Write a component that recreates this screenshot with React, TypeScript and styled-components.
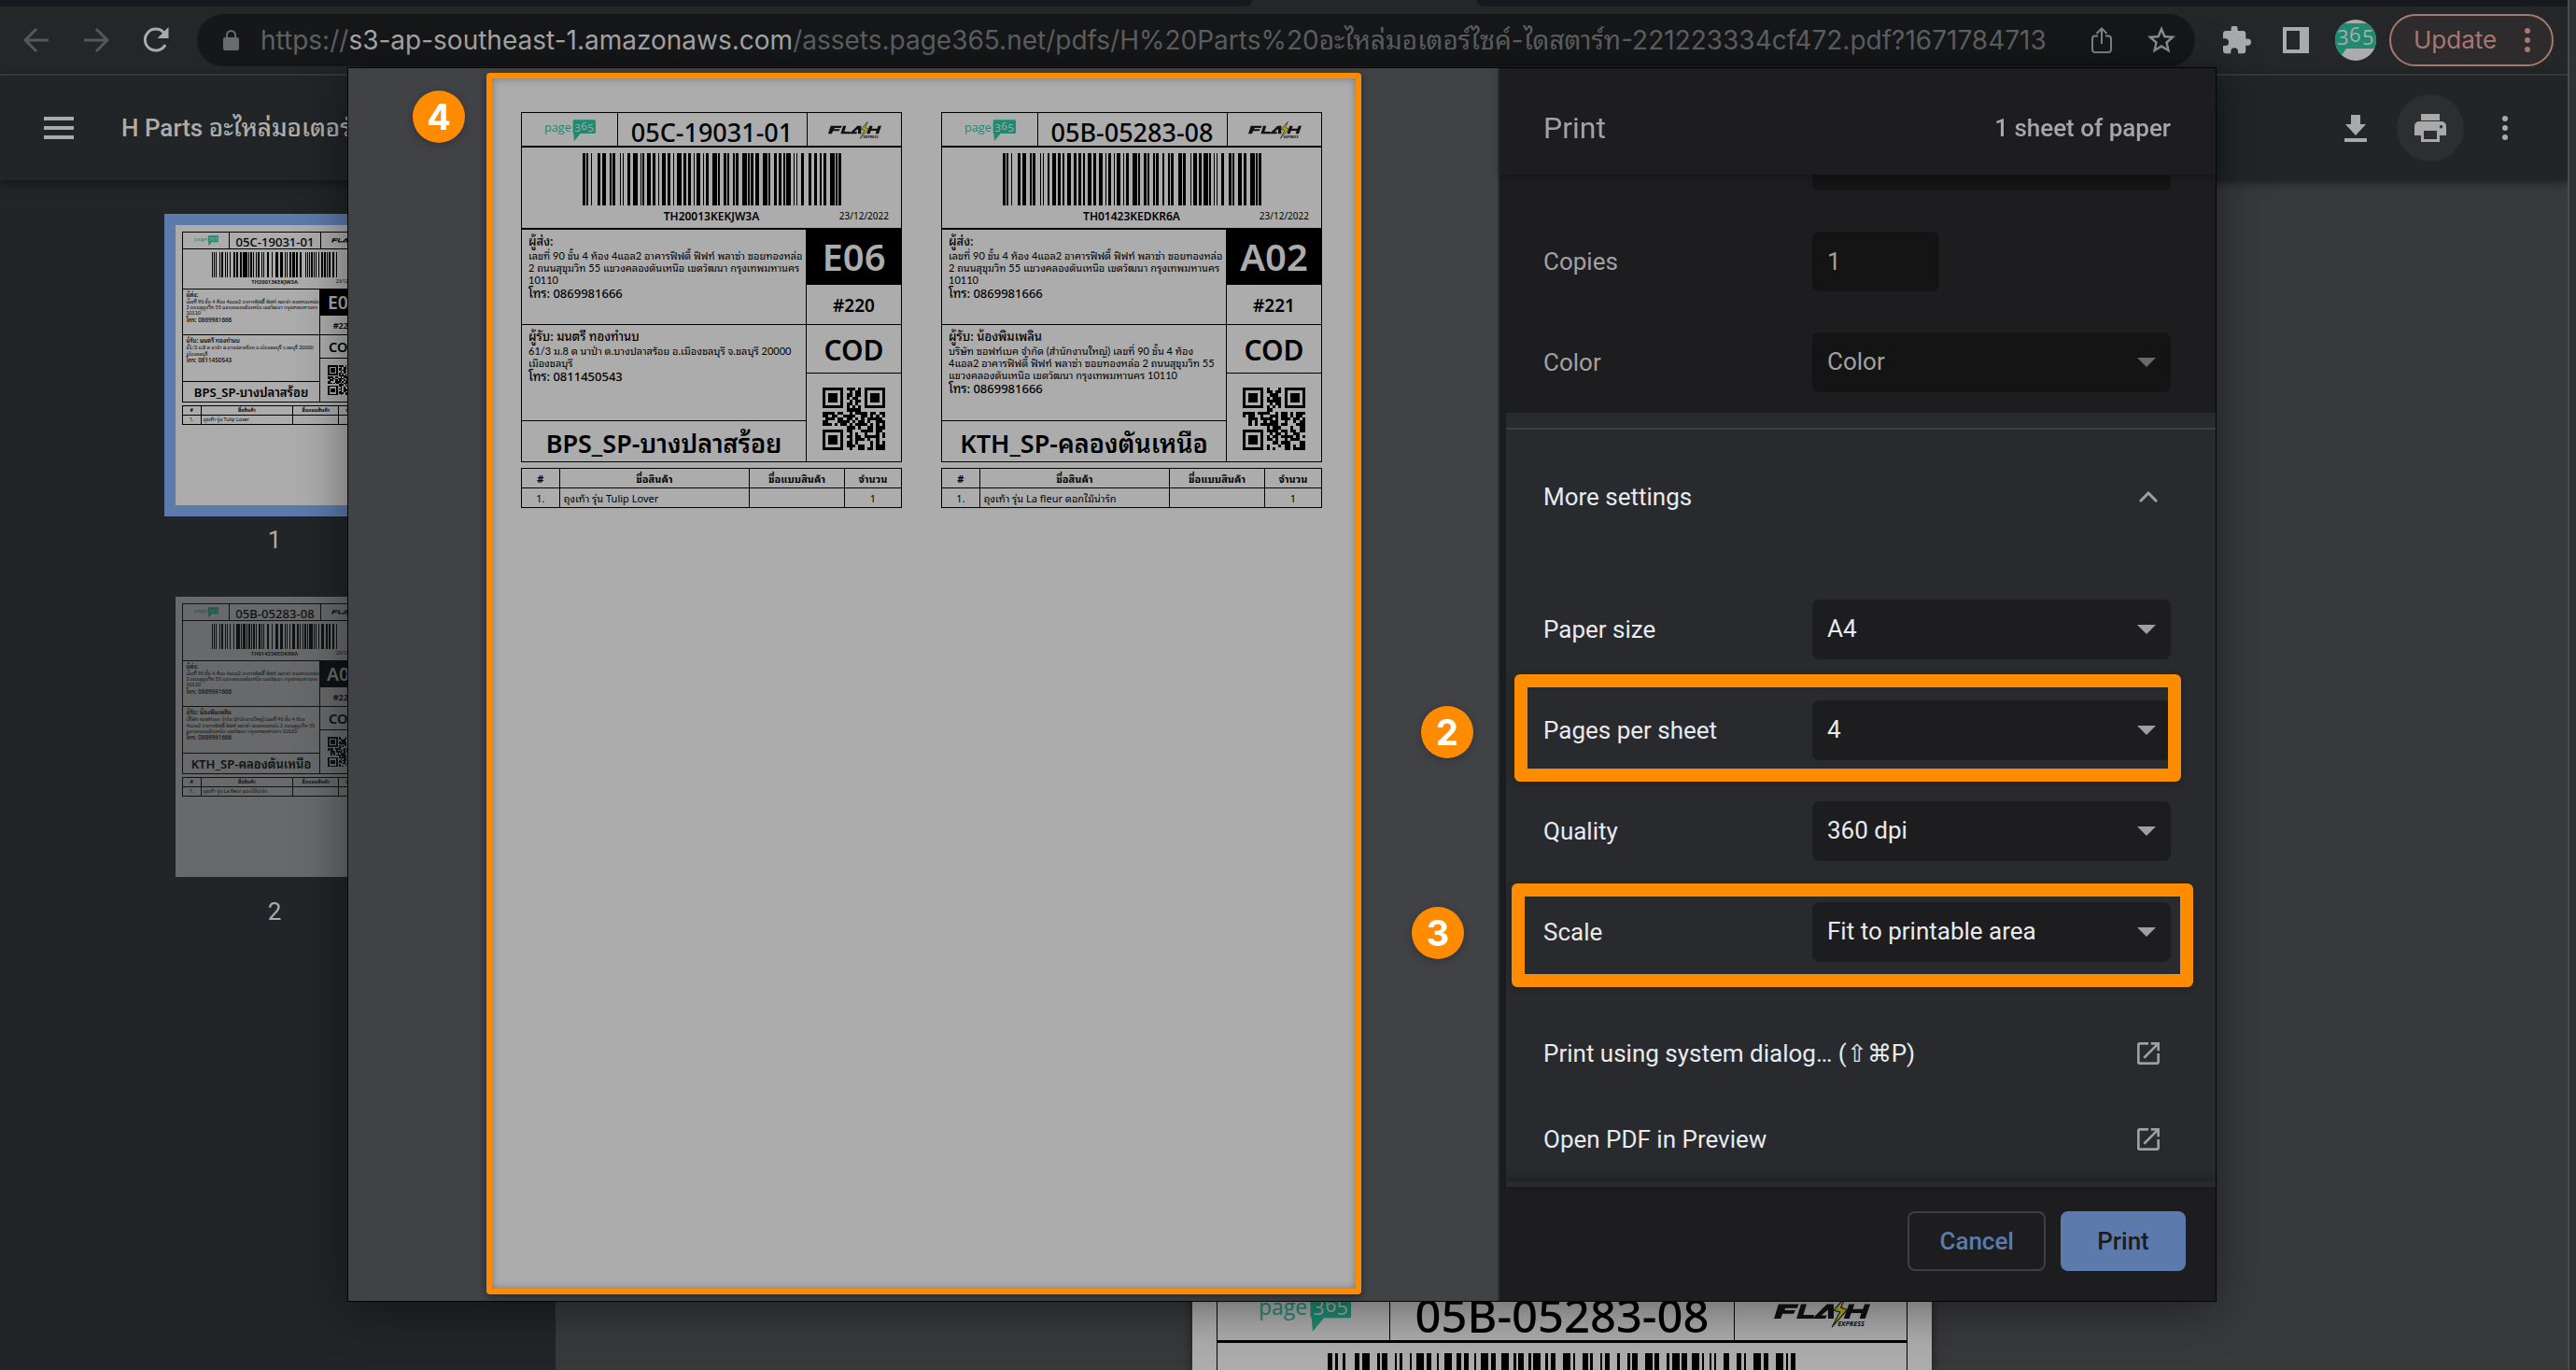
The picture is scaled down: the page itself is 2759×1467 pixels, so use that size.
import React from "react";
import styled, { createGlobalStyle, css } from "styled-components";

const ORANGE = "#ff8c00";
const PAPER = "#acacac";
const INK = "#000";
const THAI = `"Noto Sans Thai Looped", Loma, Garuda, "Noto Sans Thai"`;
const UI = `Roboto, ${THAI}, sans-serif`;
const SYSTEM = `Inter, ${THAI}, sans-serif`;
const PRINT = `"Noto Sans", ${THAI}, sans-serif`;
const PRINT_SMALL = `Lato, ${THAI}, sans-serif`;

const Global = createGlobalStyle`
  *, *::before, *::after { box-sizing: border-box; }
  html, body { margin: 0; height: 100%; overflow: hidden; background: #303132; }
  #root { height: 100%; }
  button, input, select { font: inherit; color: inherit; margin: 0; }
  button { background: none; border: 0; padding: 0; cursor: pointer; }
  svg { display: block; flex: none; }
`;

/* ---------- browser window ---------- */

const Desktop = styled.div`
  height: 100vh;
  padding-right: 7px;
  background: #303132;
  font-family: ${UI};
`;

const Window = styled.div`
  height: 100%;
  display: flex;
  flex-direction: column;
  overflow: hidden;
  border-right: 2px solid #4a4b4d;
  background: #38393b;
`;

const TabStrip = styled.div`
  flex: none;
  height: 7px;
  display: grid;
  grid-template-columns: 1341fr 241fr 1168fr;
  background: #242628;
`;

const InactiveTabs = styled.div<{ $side: "left" | "right" }>`
  background: #17181b;
  border-radius: ${(p) => (p.$side === "left" ? "0 0 7px 0" : "0 0 0 7px")};
`;

const Toolbar = styled.div`
  flex: none;
  height: 74px;
  display: flex;
  align-items: center;
  padding: 0 15px 0 25px;
  background: #242628;
  border-bottom: 2px solid #3e4143;
`;

const NavButtons = styled.div`
  display: flex;
  gap: 36px;
  margin-right: 30px;
`;

const IconButton = styled.button<{ $color?: string }>`
  display: flex;
  color: ${(p) => p.$color ?? "#a9aaab"};
`;

const Omnibox = styled.div`
  flex: 1;
  min-width: 0;
  height: 56px;
  display: flex;
  align-items: center;
  padding: 0 21px 0 28px;
  border-radius: 28px;
  background: #161719;
  color: #696b6f;
`;

const Url = styled.div`
  flex: 1;
  min-width: 0;
  margin-left: 23px;
  overflow: hidden;
  white-space: nowrap;
  font: 400 28px/40px ${SYSTEM};
  color: #5f6062;
  strong { font-weight: 400; color: #a8a9aa; }
`;

const OmniboxActions = styled.div`
  display: flex;
  align-items: center;
  gap: 38px;
`;

const Extensions = styled.div`
  display: flex;
  align-items: center;
  gap: 34px;
  margin: 0 28px 0 30px;
`;

const Avatar = styled.button`
  display: flex;
  width: 44px;
  height: 44px;
  margin-right: 14px;
  border-radius: 50%;
  overflow: hidden;
`;

const UpdateButton = styled.button`
  width: 176px;
  height: 56px;
  display: flex;
  align-items: center;
  justify-content: space-between;
  padding: 0 22px 0 24px;
  border: 2px solid #a87772;
  border-radius: 28px;
  background: #2e2b2d;
  color: #a87772;
  font: 400 26px/32px ${SYSTEM};
`;

/* ---------- pdf viewer ---------- */

const ViewerBar = styled.header`
  flex: none;
  height: 112px;
  display: flex;
  align-items: center;
  padding: 0 61px 0 47px;
  background: #212527;
  box-shadow: 0 2px 10px rgba(0, 0, 0, 0.5);
  z-index: 1;
`;

const DocTitle = styled.h1`
  flex: 1;
  margin: 0 0 0 51px;
  font: 500 26px/36px ${UI};
  color: #adadad;
`;

const RoundButton = styled.button`
  width: 72px;
  height: 72px;
  display: flex;
  align-items: center;
  justify-content: center;
  margin: 0 38px 0 32px;
  border-radius: 50%;
  background: #2d2e32;
  color: #a9a9a9;
`;

const ViewerBody = styled.div`
  flex: 1;
  min-height: 0;
  display: flex;
`;

const Thumbnails = styled.nav`
  flex: none;
  width: 595px;
  display: flex;
  flex-direction: column;
  align-items: center;
  padding: 36px 7px 0 0;
  background: #212527;
`;

const ThumbItem = styled.div`
  display: flex;
  flex-direction: column;
  align-items: center;
  height: 398px;
  color: #acacac;
  font: 400 26px/30px ${UI};
`;

const ThumbFrame = styled.button<{ $active?: boolean }>`
  flex: none;
  width: 236px;
  height: 324px;
  padding: 12px;
  margin-bottom: 10px;
  text-align: left;
  background: ${(p) => (p.$active ? "#5c7aab" : "transparent")};
`;

const ThumbPage = styled.div<{ $faded?: boolean }>`
  height: 300px;
  padding: 7px;
  background: ${PAPER};
  opacity: ${(p) => (p.$faded ? 0.5 : 1)};
`;

const Canvas = styled.main`
  flex: 1;
  min-width: 0;
  display: flex;
  flex-direction: column;
  align-items: center;
  gap: 20px;
  padding-top: 11px;
`;

const CanvasPage = styled.section`
  flex: none;
  width: 792px;
  height: 1120px;
  padding: 26px;
  background: ${PAPER};
  box-shadow: 0 0 10px rgba(0, 0, 0, 0.5);
`;

/* ---------- shipping label ---------- */

const Zoomed = styled.div<{ $zoom: number }>`
  zoom: ${(p) => p.$zoom};
`;

const LabelBox = styled.article`
  color: ${INK};
  font: 500 12px/13px ${PRINT};
`;

const LabelGrid = styled.div`
  display: grid;
  grid-template-columns: minmax(0, 1fr) 101px;
  grid-template-rows: 125px 102px 103px 43px;
  border: 1px solid ${INK};
`;

const LabelTop = styled.div`
  grid-column: 1 / -1;
  display: grid;
  grid-template-columns: 1fr 2fr 1fr;
  grid-template-rows: 37px 1fr;
  border-bottom: 2px solid ${INK};
`;

const TopCell = styled.div`
  display: flex;
  align-items: center;
  justify-content: center;
  padding: 2px 0 0 2px;
  border-bottom: 2px solid ${INK};
  border-left: 1px solid ${INK};
  &:first-child { border-left: 0; }
`;

const SortCode = styled(TopCell)`
  font-size: 27px;
  line-height: 30px;
  font-weight: 500;
  padding: 6px 0 0;
`;

const BarcodeCell = styled.div`
  grid-column: 1 / -1;
  display: grid;
  grid-template-columns: minmax(0, 1fr) 277px minmax(0, 1fr);
  grid-template-rows: 56px auto;
  row-gap: 5px;
  align-content: start;
  padding-top: 6px;
  text-align: center;
`;

const Tracking = styled.div`
  grid-column: 2;
  font-size: 12px;
  line-height: 14px;
  font-weight: 600;
`;

const PrintDate = styled.div`
  display: flex;
  justify-content: flex-end;
  font-size: 10px;
  line-height: 12px;
  font-weight: 400;
  padding-right: 13px;
`;

const Address = styled.div`
  padding: 4px 0 0 7px;
  border-bottom: 1px solid ${INK};
  border-right: 1px solid ${INK};
`;

const Party = styled.div`
  font-size: 13px;
  line-height: 17px;
  white-space: nowrap;
`;

const AddressLine = styled.div`
  font: 400 11px/13px ${PRINT_SMALL};
  white-space: nowrap;
`;

const Side = styled.div`
  grid-column: 2;
  grid-row: 2 / 5;
  display: grid;
  grid-template-rows: 59px 43px 52px 1fr;
`;

const SideCell = styled.div<{ $size: number; $solid?: boolean }>`
  display: flex;
  align-items: center;
  justify-content: center;
  font-size: ${(p) => p.$size}px;
  line-height: 1;
  font-weight: 600;
  padding-top: 2px;
  border-bottom: 1px solid ${INK};
  &:last-child { border-bottom: 0; }
  ${(p) => p.$solid && css`padding-top: 0; background: ${INK}; color: ${PAPER};`}
`;

const Hub = styled.div`
  display: flex;
  align-items: center;
  justify-content: center;
  padding-top: 4px;
  border-right: 1px solid ${INK};
  font-size: 27px;
  line-height: 36px;
  font-weight: 600;
  white-space: nowrap;
`;

const ItemTable = styled.table`
  width: 100%;
  margin-top: 6px;
  border-collapse: collapse;
  table-layout: fixed;
  font: 400 11px/12px ${PRINT};
  th, td {
    height: 21px;
    padding: 2px 4px 0;
    border: 1px solid ${INK};
    text-align: center;
    white-space: nowrap;
  }
  th { font-weight: 700; }
  td:nth-child(2) { text-align: left; }
  th:nth-child(1) { width: 10%; }
  th:nth-child(2) { width: 50%; }
  th:nth-child(3) { width: 25%; }
  th:nth-child(4) { width: 15%; }
`;

/* ---------- print dialog ---------- */

const Scrim = styled.div`
  position: fixed;
  inset: 0;
  z-index: 2;
  display: flex;
  justify-content: center;
  padding: 72px 13px 73px 0;
`;

const Dialog = styled.div`
  position: relative;
  width: 2002px;
  max-width: calc(100% - 80px);
  display: flex;
  border: 1px solid #050505;
  box-shadow: 0 6px 50px rgba(0, 0, 0, 0.45);
`;

const Preview = styled.div`
  flex: 1;
  display: flex;
  justify-content: center;
  padding: 5px 0 7px 2px;
  background: #404246;
`;

const Sheet = styled.div`
  width: 937px;
  display: grid;
  grid-template-columns: minmax(0, 1fr) minmax(0, 1fr);
  align-content: start;
  gap: 42px;
  padding: 36px 36px 0 31px;
  border: 6px solid ${ORANGE};
  border-radius: 4px;
  background: ${PAPER};
  box-shadow: inset 0 0 8px rgba(0, 0, 0, 0.3), 0 3px 8px rgba(0, 0, 0, 0.4);
`;

const Settings = styled.form`
  flex: none;
  width: 769px;
  display: flex;
  flex-direction: column;
  border-left: 2px solid #303134;
  background: #1d1d1f;
  color: #a0a1a3;
  font: 400 26px/32px ${UI};
`;

const SettingsHeader = styled.div`
  flex: none;
  height: 114px;
  display: flex;
  align-items: center;
  justify-content: space-between;
  padding: 14px 48px 0 47px;
  box-shadow: 0 2px 8px rgba(0, 0, 0, 0.3);
  z-index: 1;
  h2 { margin: 0; font: 400 32px/40px ${UI}; }
  span { font-weight: 500; color: #a6a7a8; }
`;

const ScrollArea = styled.div`
  flex: 1;
  min-height: 0;
  display: flex;
  flex-direction: column;
  justify-content: flex-end;
  overflow: hidden;
`;

const Row = styled.div<{ $mark?: string }>`
  position: relative;
  flex: none;
  height: 108px;
  display: grid;
  grid-template-columns: 1fr 384px;
  align-items: center;
  padding: 0 48px 0 40px;
  ${(p) =>
    p.$mark &&
    css`
      &::after {
        content: "";
        position: absolute;
        inset: ${p.$mark};
        border: 14px solid ${ORANGE};
        border-radius: 6px;
        box-shadow: 0 2px 8px rgba(0, 0, 0, 0.25);
        pointer-events: none;
      }
    `}
`;

const BasicRows = styled.div`
  flex: none;
  padding-left: 7px;
`;

const Field = styled.input`
  width: 136px;
  height: 64px;
  padding: 0 16px;
  border: 0;
  border-radius: 8px;
  outline: 0;
  background: #141414;
`;

const SelectWrap = styled.div<{ $lit?: boolean }>`
  display: grid;
  align-items: center;
  border-radius: 8px;
  background: ${(p) => (p.$lit ? "#1d1d1f" : "#141414")};
  color: ${(p) => (p.$lit ? "#9aa0a6" : "#666a6e")};
  > * { grid-area: 1 / 1; }
  svg { justify-self: end; margin-right: 16px; pointer-events: none; }
  select {
    height: 64px;
    padding: 0 48px 2px 16px;
    border: 0;
    outline: 0;
    appearance: none;
    background: transparent;
    color: ${(p) => (p.$lit ? "#e8eaed" : "#a0a1a3")};
  }
`;

const Expanded = styled.div`
  flex: none;
  padding: 16px 0 5px;
  border-left: 7px solid #1c1c1e;
  background: #292a2d;
  color: #e8eaed;
`;

const MoreButton = styled.button`
  width: 100%;
  height: 146px;
  display: flex;
  align-items: center;
  justify-content: space-between;
  margin-bottom: 16px;
  padding: 0 62px 0 40px;
  border-top: 2px solid #3f4043;
`;

const Links = styled.div`
  padding-top: 30px;
`;

const LinkRow = styled.button`
  width: 100%;
  height: 92px;
  display: flex;
  align-items: center;
  justify-content: space-between;
  padding: 0 60px 0 40px;
  svg { color: #9aa0a6; }
`;

const Footer = styled.div`
  flex: none;
  display: flex;
  justify-content: flex-end;
  gap: 16px;
  padding: 26px 32px 32px;
`;

const FooterEdge = styled.div`
  flex: none;
  height: 6px;
  margin: -6px 0 0 7px;
  background: #292a2d;
  box-shadow: 0 -3px 8px rgba(0, 0, 0, 0.35);
  z-index: 1;
`;

const ActionButton = styled.button<{ $primary?: boolean }>`
  height: 64px;
  min-width: 134px;
  padding: 0 32px;
  border: 2px solid ${(p) => (p.$primary ? "#5c7aab" : "#3c4043")};
  border-radius: 8px;
  background: ${(p) => (p.$primary ? "#5c7aab" : "transparent")};
  color: ${(p) => (p.$primary ? "#1b1c1f" : "#5c7aab")};
  font-weight: 500;
`;

const Badge = styled.div<{ $x: number; $y: number }>`
  position: absolute;
  left: ${(p) => p.$x}px;
  top: ${(p) => p.$y}px;
  width: 56px;
  height: 56px;
  border-radius: 50%;
  background: ${ORANGE};
  box-shadow: 0 2px 8px rgba(0, 0, 0, 0.25);
  color: #fff;
  font: 700 38px/56px ${SYSTEM};
  text-align: center;
`;

/* ---------- drawings ---------- */

const C128 = (
  "212222 222122 222221 121223 121322 131222 122213 122312 132212 221213 221312 231212 112232 122132 122231 113222 " +
  "123122 123221 223211 221132 221231 213212 223112 312131 311222 321122 321221 312212 322112 322211 212123 212321 " +
  "232121 111323 131123 131321 112313 132113 132311 211313 231113 231311 112133 112331 132131 113123 113321 133121 " +
  "313121 211331 231131 213113 213311 213131 311123 311321 331121 312113 312311 332111 314111 221411 431111 111224 " +
  "111422 121124 121421 141122 141221 112214 112412 122114 122411 142112 142211 241211 221114 413111 241112 134111 " +
  "111242 121142 121241 114212 124112 124211 411212 421112 421211 212141 214121 412121 111143 111341 131141 114113 " +
  "114311 411113 411311 113141 114131 311141 411131 211412 211214 211232 2331112"
).split(" ");

function Barcode({ value }: { value: string }) {
  const codes = [104, ...value.split("").map((c) => c.charCodeAt(0) - 32)];
  const check = codes.reduce((sum, c, i) => sum + c * Math.max(i, 1), 0) % 103;
  const runs = [...codes, check, 106].map((c) => C128[c]).join("");
  let x = 0;
  let d = "";
  runs.split("").forEach((w, i) => {
    if (i % 2 === 0) d += `M${x} 0h${w}v10h-${w}z`;
    x += Number(w);
  });
  return (
    <svg width="277" height="56" viewBox={`0 0 ${x} 10`} preserveAspectRatio="none" shapeRendering="crispEdges">
      <path d={d} />
    </svg>
  );
}

const QR: Record<string, string[]> = {
  a: [
    "#######.###.#.#######", "#.....#..#.##.#.....#", "#.###.#.##.##.#.###.#", "#.###.#.#.##..#.###.#",
    "#.###.#..#.##.#.###.#", "#.....#.##.#..#.....#", "#######.#.#.#.#######", "........#####........",
    "####.##..#.####.##.##", "##.##..####..##.#.#.#", ".###.##.##.#.#.#####.", "##...####.#.##.#..###",
    "###.#.##.#.####.#.#.#", "........###.#..##.###", "#######.##...####.##.", "#.....#..#.#..#...#.#",
    "#.###.#.##.##.#####.#", "#.###.#..#.###.#..#..", "#.###.#.##.#....#.#.#", "#.....#.###.##..#.###",
    "#######..#..##.##.###",
  ],
  b: [
    "#######.#...#.#######", "#.....#.##.##.#.....#", "#.###.#..###..#.###.#", "#.###.#.#.###.#.###.#",
    "#.###.#.#####.#.###.#", "#.....#..#.##.#.....#", "#######.#.#.#.#######", "........##...........",
    "####.####..#.##.#.###", "#.##..#..###.##.#.##.", "..###.####.#.###.##.#", "..#.#..#.###..#..#.##",
    "..#.#.######.##...###", "........#.###...#..##", "#######.####.##.##.##", "#.....#..#.##.#..##..",
    "#.###.#.#.##.####.#.#", "#.###.#.##.#..#.###..", "#.###.#...##.###...##", "#.....#.#...#.##.#.##",
    "#######.#.#...##.####",
  ],
};

function QrCode({ code }: { code: string }) {
  const d = QR[code]
    .map((row, y) => row.split("").map((c, x) => (c === "#" ? `M${x} ${y}h1v1h-1z` : "")).join(""))
    .join("");
  return (
    <svg width="67" height="67" viewBox="0 0 21 21" shapeRendering="crispEdges">
      <path d={d} />
    </svg>
  );
}

const Page365 = () => (
  <svg width="55" height="23" viewBox="0 0 165 69">
    <text x="0" y="39" fontFamily="Open Sans, sans-serif" fontSize="38" fill="#1e8a70">page</text>
    <path d="M95 1h66q4 0 4 4v36q0 4-4 4h-45L96 69l-2-24q-2 0-2-4V5q0-4 3-4z" fill="#1e8a70" />
    <g fontFamily="Open Sans, sans-serif" fontSize="35" fill={PAPER}>
      <text x="97" y="39">3</text>
      <text x="118" y="34">6</text>
      <text x="139" y="39">5</text>
    </g>
  </svg>
);

const FlashLogo = () => (
  <svg width="57" height="19" viewBox="0 0 171 57">
    <g fill="#111">
      <path d="M8 14h36l-3 7H20l-1 4h19l-3 6H15l-3 9H0z" />
      <path d="M48 14h10l-6 19h20l-3 7H40z" />
      <path d="M94 14h12v26H96V24L84 34h10l-3 6H68z" />
      <path d="M133 14h10l-3 9h18l3-9h10l-9 26h-10l3-10h-18l-3 10h-10z" />
    </g>
    <path d="M127 1l-21 24 11 3-14 27 27-31-11-4z" fill="#b5a817" stroke="#222" strokeWidth="2" />
    <text x="113" y="53" fontFamily="Open Sans, sans-serif" fontWeight="700" fontStyle="italic" fontSize="12" fill="#111">EXPRESS</text>
  </svg>
);

const Caret = () => (
  <svg width="20" height="10" viewBox="0 0 20 10"><path d="M0 0h20L10 10z" fill="currentColor" /></svg>
);

const OpenIcon = () => (
  <svg width="24" height="24" viewBox="3 3 18 18">
    <path fill="currentColor" d="M19 19H5V5h7V3H5a2 2 0 0 0-2 2v14a2 2 0 0 0 2 2h14c1.1 0 2-.9 2-2v-7h-2v7zM14 3v2h3.59l-9.83 9.83 1.41 1.41L19 6.41V10h2V3h-7z" />
  </svg>
);

const Dots = ({ w = 12, gap = 10, r = 3 }: { w?: number; gap?: number; r?: number }) => (
  <svg width={w} height="28" viewBox={`${-w / 2} -14 ${w} 28`} fill="currentColor">
    <circle cy={-gap} r={r} /><circle r={r} /><circle cy={gap} r={r} />
  </svg>
);

/* ---------- content ---------- */

type LabelData = {
  sort: string; tracking: string; zone: string; order: string; hub: string; qr: string;
  recipient: string; address: string[]; phone: string; item: string;
};

const LABELS: LabelData[] = [
  {
    sort: "05C-19031-01", tracking: "TH20013KEKJW3A", zone: "E06", order: "#220", hub: "BPS_SP-บางปลาสร้อย", qr: "a",
    recipient: "มนตรี ทองทำนบ",
    address: ["61/3 ม.8 ต นาป่า ต.บางปลาสร้อย อ.เมืองชลบุรี จ.ชลบุรี 20000", "เมืองชลบุรี"],
    phone: "0811450543", item: "ถุงเท้า รุ่น Tulip Lover",
  },
  {
    sort: "05B-05283-08", tracking: "TH01423KEDKR6A", zone: "A02", order: "#221", hub: "KTH_SP-คลองตันเหนือ", qr: "b",
    recipient: "น้องพิมเพลิน",
    address: [
      "บริษัท ซอฟท์เบค จำกัด (สำนักงานใหญ่) เลขที่ 90 ชั้น 4 ห้อง",
      "4แอล2 อาคารฟิฟตี้ ฟิฟท์ พลาซ่า ซอยทองหล่อ 2 ถนนสุขุมวิท 55",
      "แขวงคลองตันเหนือ เขตวัฒนา กรุงเทพมหานคร 10110",
    ],
    phone: "0869981666", item: "ถุงเท้า รุ่น La fleur ดอกไม้น่ารัก",
  },
];

const SENDER = [
  "เลขที่ 90 ชั้น 4 ห้อง 4แอล2 อาคารฟิฟตี้ ฟิฟท์ พลาซ่า ซอยทองหล่อ",
  "2 ถนนสุขุมวิท 55 แขวงคลองตันเหนือ เขตวัฒนา กรุงเทพมหานคร",
  "10110",
];

function LabelHead({ data }: { data: LabelData }) {
  return (
    <LabelTop>
      <TopCell><Page365 /></TopCell>
      <SortCode>{data.sort}</SortCode>
      <TopCell><FlashLogo /></TopCell>
      <BarcodeCell>
        <span />
        <Barcode value={data.tracking} />
        <span />
        <Tracking>{data.tracking}</Tracking>
        <PrintDate>23/12/2022</PrintDate>
      </BarcodeCell>
    </LabelTop>
  );
}

function ShippingLabel({ data }: { data: LabelData }) {
  return (
    <LabelBox>
      <LabelGrid>
        <LabelHead data={data} />
        <Address>
          <Party>ผู้ส่ง:</Party>
          {SENDER.map((l) => <AddressLine key={l}>{l}</AddressLine>)}
          <Party>โทร: 0869981666</Party>
        </Address>
        <Address>
          <Party>ผู้รับ: {data.recipient}</Party>
          {data.address.map((l) => <AddressLine key={l}>{l}</AddressLine>)}
          <Party>โทร: {data.phone}</Party>
        </Address>
        <Hub>{data.hub}</Hub>
        <Side>
          <SideCell $size={40} $solid>{data.zone}</SideCell>
          <SideCell $size={19}>{data.order}</SideCell>
          <SideCell $size={30}>COD</SideCell>
          <SideCell $size={12}><QrCode code={data.qr} /></SideCell>
        </Side>
      </LabelGrid>
      <ItemTable>
        <thead>
          <tr><th>#</th><th>ชื่อสินค้า</th><th>ชื่อแบบสินค้า</th><th>จำนวน</th></tr>
        </thead>
        <tbody>
          <tr><td>1.</td><td>{data.item}</td><td></td><td>1</td></tr>
        </tbody>
      </ItemTable>
    </LabelBox>
  );
}

function SelectRow({ id, label, value, lit, mark }: { id: string; label: string; value: string; lit?: boolean; mark?: string }) {
  return (
    <Row $mark={mark}>
      <label htmlFor={id}>{label}</label>
      <SelectWrap $lit={lit}>
        <select id={id} defaultValue={value}><option>{value}</option></select>
        <Caret />
      </SelectWrap>
    </Row>
  );
}

function BrowserToolbar() {
  return (
    <Toolbar>
      <NavButtons>
        <IconButton aria-label="Back" $color="#55575a">
          <svg width="28" height="28" viewBox="0 0 28 28" fill="none" stroke="currentColor" strokeWidth="3"><path d="M27 14H3M14 2L2 14l12 12" /></svg>
        </IconButton>
        <IconButton aria-label="Forward" $color="#55575a">
          <svg width="28" height="28" viewBox="0 0 28 28" fill="none" stroke="currentColor" strokeWidth="3"><path d="M1 14h24M14 2l12 12-12 12" /></svg>
        </IconButton>
        <IconButton aria-label="Reload">
          <svg width="28" height="28" viewBox="0 0 28 28"><path d="M24 19A11.500 11.500 0 1 1 22.500 6" fill="none" stroke="currentColor" strokeWidth="3" /><path d="M27.500 0v12H15.500z" fill="currentColor" /></svg>
        </IconButton>
      </NavButtons>
      <Omnibox>
        <svg width="17" height="22" viewBox="0 0 17 22"><rect y="8" width="17" height="14" rx="2" fill="currentColor" /><path d="M4 9V5.500a4.500 4.500 0 0 1 9 0V9" fill="none" stroke="currentColor" strokeWidth="2" /></svg>
        <Url>https://<strong>s3-ap-southeast-1.amazonaws.com</strong>/assets.page365.net/pdfs/H%20Parts%20อะไหล่มอเตอร์ไซค์-ไดสตาร์ท-221223334cf472.pdf?1671784713</Url>
        <OmniboxActions>
          <IconButton aria-label="Share" $color="#828384">
            <svg width="22" height="28" viewBox="0 0 22 28" fill="none" stroke="currentColor" strokeWidth="2"><path d="M7 9.500H4a3 3 0 0 0-3 3V24a3 3 0 0 0 3 3h14a3 3 0 0 0 3-3V12.500a3 3 0 0 0-3-3h-3M11 18V2M5.500 7L11 1.500 16.500 7" /></svg>
          </IconButton>
          <IconButton aria-label="Bookmark" $color="#8f9091">
            <svg width="30" height="30" viewBox="2 2 20 20"><path fill="currentColor" d="M22 9.240l-7.190-.62L12 2 9.190 8.630 2 9.240l5.460 4.730L5.820 21 12 17.270 18.180 21l-1.630-7.030L22 9.240zM12 15.400l-3.760 2.270 1-4.280-3.320-2.880 4.380-.38L12 6.100l1.710 4.040 4.380.38-3.320 2.880 1 4.280L12 15.400z" /></svg>
          </IconButton>
        </OmniboxActions>
      </Omnibox>
      <Extensions>
        <IconButton aria-label="Extensions">
          <svg width="30" height="30" viewBox="2 1.500 21 21"><path fill="currentColor" d="M20.500 11H19V7c0-1.100-.9-2-2-2h-4V3.500a2.500 2.500 0 0 0-5 0V5H4c-1.100 0-1.990.9-1.990 2v3.800H3.500a2.700 2.700 0 0 1 0 5.400H2V20c0 1.100.9 2 2 2h3.800v-1.500a2.700 2.700 0 0 1 5.400 0V22H17c1.100 0 2-.9 2-2v-4h1.500a2.500 2.500 0 0 0 0-5z" /></svg>
        </IconButton>
        <IconButton aria-label="Side panel">
          <svg width="28" height="28" viewBox="0 0 28 28"><path fill="currentColor" fillRule="evenodd" d="M0 0h28v28H0zM4 4v20h14V4z" /></svg>
        </IconButton>
      </Extensions>
      <Avatar aria-label="Profile">
        <svg width="44" height="44" viewBox="0 0 44 44">
          <rect width="44" height="44" fill="#acacac" />
          <path d="M0 4h44v27H12l-5 7H0z" fill="#1e8a70" />
          <g fontFamily="Open Sans, sans-serif" fontSize="22" fill="#acacac"><text x="2" y="27">3</text><text x="15" y="24">6</text><text x="29" y="27">5</text></g>
        </svg>
      </Avatar>
      <UpdateButton>Update<Dots w={8} gap={10} r={3} /></UpdateButton>
    </Toolbar>
  );
}

function PdfBar() {
  return (
    <ViewerBar>
      <IconButton aria-label="Menu">
        <svg width="32" height="24" viewBox="0 0 32 24" fill="currentColor"><path d="M0 0h32v4H0zM0 10h32v4H0zM0 20h32v4H0z" /></svg>
      </IconButton>
      <DocTitle>H Parts อะไหล่มอเตอร์</DocTitle>
      <IconButton aria-label="Download">
        <svg width="24" height="29" viewBox="0 0 24 29" fill="currentColor"><path d="M7 0h10v10h6L12 22 1 10h6zM0 25h24v4H0z" /></svg>
      </IconButton>
      <RoundButton aria-label="Print document">
        <svg width="34" height="30" viewBox="0 0 34 30" fill="currentColor"><path fillRule="evenodd" d="M7 0h20v7H7zM5 8h24a5 5 0 0 1 5 5v10h-7v7H7v-7H0V13a5 5 0 0 1 5-5zm5 10v9h14v-9zM28.500 12a1.700 1.700 0 1 0 .01 0z" /></svg>
      </RoundButton>
      <IconButton aria-label="More actions"><Dots w={12} gap={10} r={3} /></IconButton>
    </ViewerBar>
  );
}

function PrintDialog() {
  return (
    <Scrim>
      <Dialog role="dialog" aria-label="Print">
        <Preview>
          <Sheet>{LABELS.map((l) => <ShippingLabel key={l.sort} data={l} />)}</Sheet>
        </Preview>
        <Settings onSubmit={(e) => e.preventDefault()}>
          <SettingsHeader><h2>Print</h2><span>1 sheet of paper</span></SettingsHeader>
          <ScrollArea>
            <BasicRows>
              <SelectRow id="pages" label="Pages" value="All" />
              <Row><label htmlFor="copies">Copies</label><Field id="copies" defaultValue="1" /></Row>
              <SelectRow id="color" label="Color" value="Color" />
            </BasicRows>
            <Expanded>
              <MoreButton type="button">
                More settings
                <svg width="20" height="12" viewBox="0 0 20 12" fill="none" stroke="#9aa0a6" strokeWidth="3"><path d="M1 11l9-9 9 9" /></svg>
              </MoreButton>
              <SelectRow lit id="paper" label="Paper size" value="A4" />
              <SelectRow lit id="sheet" label="Pages per sheet" value="4" mark="-6px 37px -1px 9px" />
              <SelectRow lit id="quality" label="Quality" value="360 dpi" />
              <SelectRow lit id="scale" label="Scale" value="Fit to printable area" mark="2px 24px -5px 6px" />
              <Links>
                <LinkRow type="button">Print using system dialog… (⇧⌘P)<OpenIcon /></LinkRow>
                <LinkRow type="button">Open PDF in Preview<OpenIcon /></LinkRow>
              </Links>
            </Expanded>
          </ScrollArea>
          <FooterEdge />
          <Footer>
            <ActionButton type="button">Cancel</ActionButton>
            <ActionButton $primary>Print</ActionButton>
          </Footer>
        </Settings>
        <Badge $x={69} $y={24}>4</Badge>
        <Badge $x={1149} $y={683}>2</Badge>
        <Badge $x={1139} $y={898}>3</Badge>
      </Dialog>
    </Scrim>
  );
}

export default function App() {
  return (
    <Desktop>
      <Global />
      <Window>
        <TabStrip><InactiveTabs $side="left" /><span /><InactiveTabs $side="right" /></TabStrip>
        <BrowserToolbar />
        <PdfBar />
        <ViewerBody>
          <Thumbnails>
            {LABELS.map((l, i) => (
              <ThumbItem key={l.sort}>
                <ThumbFrame $active={i === 0} aria-label={`Page ${i + 1}`}>
                  <ThumbPage $faded={i > 0}><Zoomed $zoom={0.485}><ShippingLabel data={l} /></Zoomed></ThumbPage>
                </ThumbFrame>
                {i + 1}
              </ThumbItem>
            ))}
          </Thumbnails>
          <Canvas>
            <CanvasPage />
            <CanvasPage><Zoomed $zoom={1.81}><ShippingLabel data={LABELS[1]} /></Zoomed></CanvasPage>
          </Canvas>
        </ViewerBody>
      </Window>
      <PrintDialog />
    </Desktop>
  );
}
